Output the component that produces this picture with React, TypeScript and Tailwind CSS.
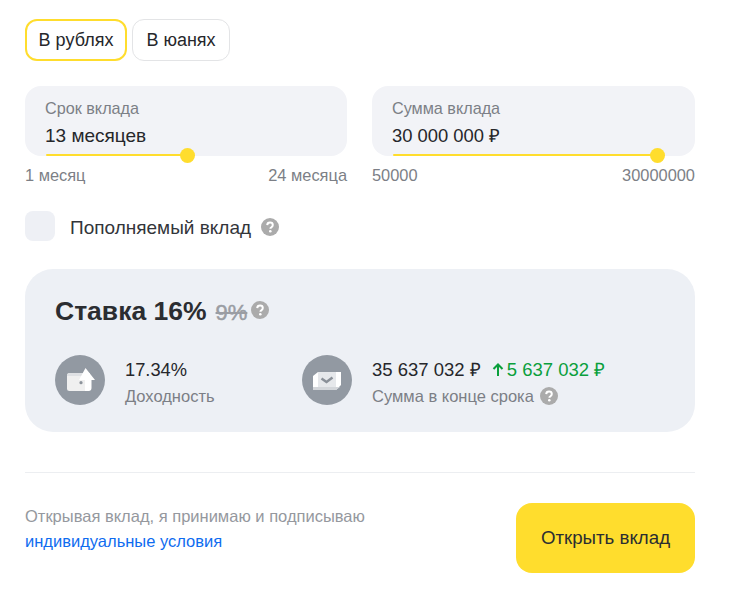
const font = { fontFamily: '"Liberation Sans", Arial, sans-serif' };

function Help({ size = 18 }: { size?: number }) {
  return (
    <svg width={size} height={size} viewBox="0 0 18 18" className="shrink-0">
      <circle cx="9" cy="9" r="9" fill="#ababab" />
      <path d="M6.2 7.1C6.3 5.5 7.500 4.600 9 4.600c1.600 0 2.800 1 2.800 2.400 0 1.200-.7 1.800-1.500 2.300-.7.4-.9.7-.9 1.400" fill="none" stroke="#fff" strokeWidth="2" />
      <circle cx="9.300" cy="13.300" r="1.300" fill="#fff" />
    </svg>
  );
}

function Field({ label, value, from, to, pct, width, valueSize }: { label: string; value: string; from: string; to: string; pct: number; width: string; valueSize: string }) {
  return (
    <div className={width}>
      <div className="relative h-[70px] rounded-[16px] bg-[#f2f3f7] pl-5 pt-[12px]">
        <div className="text-[16.2px] leading-5 text-[#7c7f86]">{label}</div>
        <div className={`mt-[7px] leading-[22px] text-[#26272b] ${valueSize}`}>{value}</div>
        <div className="absolute left-[21px] top-[68px] h-[2px] rounded bg-[#ffdd2d]" style={{ width: pct }} />
        <div className="absolute top-[62px] h-[15px] w-[15px] rounded-full bg-[#ffdd2d]" style={{ left: 21 + pct - 7.5 }} />
      </div>
      <div className="mt-[9px] flex justify-between text-[16.4px] leading-5 text-[#7c7f86]">
        <span>{from}</span>
        <span>{to}</span>
      </div>
    </div>
  );
}

export default function App() {
  return (
    <div className="h-[592px] w-[731px] overflow-hidden bg-white pl-[25px] pr-[36px] pt-[19px]" style={font}>
      <div className="flex gap-[5px]">
        <div className="flex h-[42px] w-[102px] items-center justify-center rounded-[12px] border-2 border-[#ffdd2d] pt-[1px] text-[18px] text-[#26272b]">В рублях</div>
        <div className="flex h-[42px] w-[98px] items-center justify-center rounded-[12px] border border-[#e3e4e6] pt-[1px] text-[18px] text-[#26272b]">В юанях</div>
      </div>

      <div className="mt-[25px] flex gap-[25px]">
        <Field label="Срок вклада" value="13 месяцев" from="1 месяц" to="24 месяца" pct={141} width="w-[322px]" valueSize="text-[19px]" />
        <Field label="Сумма вклада" value="30 000 000 ₽" from="50000" to="30000000" pct={264} width="w-[323px]" valueSize="text-[18.4px]" />
      </div>

      <div className="mt-[26px] flex h-[30px] items-center">
        <div className="h-[30px] w-[30px] rounded-[8px] bg-[#eef0f5]" />
        <span className="ml-[15px] mt-[4px] text-[19px] leading-[34px] text-[#33353a]">Пополняемый вклад</span>
        <span className="ml-[10px] mt-[2px]"><Help /></span>
      </div>

      <div className="mt-[28px] h-[163px] rounded-[28px] bg-[#edf0f5] pl-[30px] pt-[26px]">
        <div className="flex h-[34px] items-center">
          <span className="text-[26.5px] font-bold text-[#2b2d31]">Ставка 16%</span>
          <span className="ml-[9px] text-[22px] text-[#9a9da3] line-through [-webkit-text-stroke:0.5px_#9a9da3]">9%</span>
          <span className="-mt-[5px] ml-[4px]"><Help /></span>
        </div>
        <div className="mt-[26px] flex">
          <div className="flex w-[247px]">
            <div className="flex h-[50px] w-[50px] items-center justify-center rounded-full bg-[#9299a2]">
              <svg width="30" height="26" viewBox="0 0 30 26">
                <rect x="2" y="6" width="23" height="18" rx="2.500" fill="#f0f0f0" />
                <path d="M2 8.500A2.500 2.500 0 0 1 4.500 6H25v3H2z" fill="#dfe1e4" />
                <path d="M20 24V13h-6L20.500 1 30 13h-3.500v8a3 3 0 0 1-3 3z" fill="#fff" />
                <rect x="14" y="13" width="6" height="11" fill="#f0f0f0" />
                <circle cx="16" cy="15.700" r="1.600" fill="#8d939b" />
              </svg>
            </div>
            <div className="ml-5 mt-[3px]">
              <div className="text-[18.300px] leading-[24px] text-[#26272b]">17.34%</div>
              <div className="mt-[4px] text-[16.500px] leading-5 text-[#7c7f86]">Доходность</div>
            </div>
          </div>
          <div className="flex">
            <div className="flex h-[50px] w-[50px] items-center justify-center rounded-full bg-[#9299a2]">
              <svg width="30" height="22" viewBox="0 0 30 22">
                <path d="M1 7l5-4h23v13l-5 5H1z" fill="#fff" />
                <path d="M1 18h27l-4 3H1z" fill="#d3d6da" />
                <rect x="6" y="3" width="18" height="15" fill="#e6e8eb" />
                <path d="M9.500 9.500l5 3.500 6-4.500" fill="none" stroke="#8a9098" strokeWidth="2.500" />
              </svg>
            </div>
            <div className="ml-5 mt-[3px]">
              <div className="flex items-center text-[18.500px] leading-[24px] text-[#26272b]">
                <span>35 637 032 ₽</span>
                <svg width="12" height="14" viewBox="0 0 12 14" className="ml-[11px]">
                  <path d="M6 13V2M1.500 6L6 1.500 10.500 6" fill="none" stroke="#0a9f3c" strokeWidth="2" />
                </svg>
                <span className="ml-[3px] text-[#0a9f3c]">5 637 032 ₽</span>
              </div>
              <div className="mt-[4px] flex items-center text-[16.500px] leading-5 text-[#7c7f86]">
                <span>Сумма в конце срока</span>
                <span className="ml-[6px]"><Help /></span>
              </div>
            </div>
          </div>
        </div>
      </div>

      <div className="mt-10 h-px bg-[#eceef1]" />

      <div className="mt-[30px] flex items-start justify-between">
        <div className="mt-[1px] text-[16.500px] leading-[25px]">
          <div className="text-[#95989e]">Открывая вклад, я принимаю и подписываю</div>
          <div className="text-[#0f6cf0]">индивидуальные условия</div>
        </div>
        <div className="flex h-[70px] w-[179px] items-center justify-center rounded-[16px] bg-[#ffdd2d] text-[18.700px] text-[#2b2d31]">Открыть вклад</div>
      </div>
    </div>
  );
}
